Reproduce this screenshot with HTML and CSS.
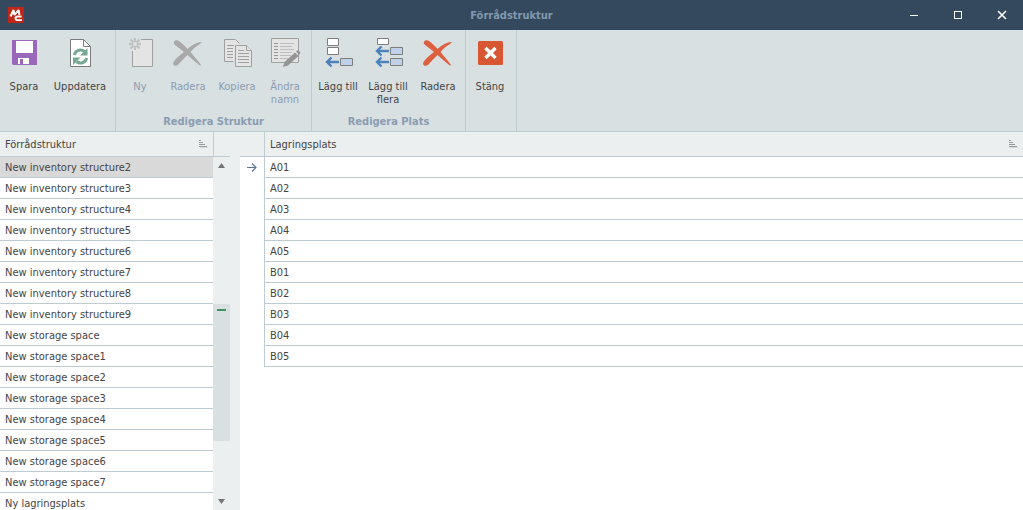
FILE: index.html
```html
<!DOCTYPE html>
<html lang="sv">
<head>
<meta charset="utf-8">
<title>Förrådstruktur</title>
<link rel="stylesheet" href="styles.css">
</head>
<body>
<svg class="defs" aria-hidden="true">
  <symbol id="cross" viewBox="0 0 32 32"><path d="M2 7C1 4 4 2 7 4C10 6 13 9 15.500 12C20 8 25 5 29.500 5C30.500 5.500 29 6 28 7C24 9 21 12 18.500 15C22 19 26 24 29 28C28.500 29 27 28 26 27C22 24 19 21 15.500 18C12 21 9 25 6 28C3 30 0 28 1.500 25C4 21 8 18 12 15C9 12 5 10 2 7Z"/></symbol>
  <symbol id="sort" viewBox="0 0 9 8"><path d="M0 .5h2M0 2.500h4M0 4.500h6M0 6.500h8" stroke="#9b9b9b" fill="none"/><path d="M1 7.500h8" stroke="#d5dada"/></symbol>
</svg>
<div class="window">
  <header class="titlebar">
    <svg class="logo" viewBox="0 0 16 16"><rect width="16" height="16" fill="#c02617"/><path d="M2.500 9.500L5.500 3L6.500 8L10.500 3L11.500 8" fill="none" stroke="#fff" stroke-width="2" stroke-linejoin="bevel"/><path d="M13.500 9.500H10Q7.500 9.500 7.500 11.300Q7.700 13.200 10 13.200H14" fill="none" stroke="#fff" stroke-width="1.800"/></svg>
    <h1 class="title">Förrådstruktur</h1>
    <div class="controls">
      <button class="control" aria-label="Minimera"><svg viewBox="0 0 10 10"><path d="M1 5.500h8" stroke="#fff"/></svg></button>
      <button class="control" aria-label="Maximera"><svg viewBox="0 0 10 10"><rect x="1.500" y="1.500" width="7" height="7" fill="none" stroke="#fff"/></svg></button>
      <button class="control" aria-label="Stäng fönster"><svg viewBox="0 0 10 10"><path d="M1 1l8 8M9 1L1 9" stroke="#fff" stroke-width="1.600"/></svg></button>
    </div>
  </header>

  <div class="ribbon">
    <section class="group file">
      <div class="tools">
        <button class="tool"><svg viewBox="0 0 32 32"><path d="M4 3h25v25H5l-1-1z" fill="#9b67bb"/><path d="M8 4h17v12H8zM10 21h11v6H10z" fill="#fff"/><path d="M12 22h3v5h-3z" fill="#9b67bb"/></svg>Spara</button>
        <button class="tool wide"><svg viewBox="0 0 32 32"><path d="M6.500 2.500h13l7 7v20h-20z" fill="#fff" stroke="#7b7b7b"/><path d="M19.500 2.500v7h7" fill="none" stroke="#7b7b7b"/><path d="M10.500 18a6 5.500 0 0 1 10-3.500M22.500 21a6 5.500 0 0 1-10 3.500" fill="none" stroke="#76a793" stroke-width="3"/><path d="M23.500 11v7.500H16zM9 28v-7.500h7.500z" fill="#76a793"/></svg>Uppdatera</button>
      </div>
    </section>
    <section class="group structure">
      <div class="tools">
        <button class="tool" disabled><svg viewBox="0 0 32 32"><path d="M16 3h12v8H16z" fill="#e4e4e4"/><path d="M8.500 14v15.500h20V11h-20z" fill="#e4e4e4"/><path d="M8.500 14v15.500h20v-27H17" fill="none" stroke="#a0a0a0"/><path d="M11 1v4M11 9v4M5 7h4M13 7h4M6.500 2.500l3 3M12.500 8.500l3 3M15.500 2.500l-3 3M9.500 8.500l-3 3" stroke="#bfc1c1" stroke-width="2"/></svg>Ny</button>
        <button class="tool" disabled><svg class="gray"><use href="#cross"/></svg>Radera</button>
        <button class="tool copy" disabled><svg viewBox="0 0 32 32"><g fill="#e4e4e4" stroke="#a0a0a0"><path d="M12.500 24.500h-9v-22h11l4 4"/><path d="M14.500 8.500h11l5 5v16h-16z"/><path d="M25.500 8.500v5h5M6 8.500h7M6 11.500h6M6 14.500h6M6 17.500h6M6 20.500h6M17 13.500h6M17 16.500h11M17 19.500h11M17 22.500h11M17 25.500h11"/></g></svg>Kopiera</button>
        <button class="tool rename" disabled><svg viewBox="0 0 32 32"><path d="M2.500 1.500h27v24h-27z" fill="#e4e4e4" stroke="#a0a0a0"/><path d="M5 6.500h4M5 9.500h4M5 12.500h4M5 15.500h4M5 18.500h4M5 21.500h4" stroke="#969696"/><path d="M11 6.500h14M11 9.500h12M11 12.500h14M11 15.500h12M11 18.500h11M11 21.500h8" stroke="#bdbdbd"/><path d="M14 30l1.500-5L26 15.500l3.500 3.500L19 28.500zM27 14.500l2-1.500 2.500 2.500-1.500 2.500z" fill="#949494"/></svg>Ändra<br>namn</button>
      </div>
      <h2 class="caption">Redigera Struktur</h2>
    </section>
    <section class="group place">
      <div class="tools">
        <button class="tool"><svg viewBox="0 0 32 32"><g stroke="#7d7d7d"><path d="M5.500 1.500h11v7h-11zM5.500 10.500h11v7h-11z" fill="#fff"/><path d="M18.500 21.500h12v7h-12z" fill="#bfd2ea"/></g><path d="M17 25H5M9.500 20.500L5 25l4.500 4.500" fill="none" stroke="#4b82bb" stroke-width="2.400"/></svg>Lägg till</button>
        <button class="tool"><svg viewBox="0 0 32 32"><g stroke="#7d7d7d"><path d="M5.500 1.500h11v6h-11z" fill="#fff"/><path d="M18.500 10.500h12v7h-12zM18.500 21.500h12v7h-12z" fill="#bfd2ea"/></g><path d="M17 14H5M9.500 9.500L5 14l4.500 4.500M17 25H5M9.500 20.500L5 25l4.500 4.500" fill="none" stroke="#4b82bb" stroke-width="2.400"/></svg>Lägg till<br>flera</button>
        <button class="tool"><svg class="red"><use href="#cross"/></svg>Radera</button>
      </div>
      <h2 class="caption">Redigera Plats</h2>
    </section>
    <section class="group close">
      <div class="tools">
        <button class="tool"><svg viewBox="0 0 32 32"><rect x="4" y="4" width="25" height="24" rx="1.500" fill="#d95632"/><path d="M11.500 11l10 10M21.500 11l-10 10" stroke="#fff" stroke-width="3.400"/></svg>Stäng</button>
      </div>
    </section>
  </div>

  <main class="panes">
    <div class="list">
      <table class="grid">
        <thead><tr><th><div class="head">Förrådstruktur<svg class="sort"><use href="#sort"/></svg></div></th></tr></thead>
        <tbody>
          <tr class="selected"><td>New inventory structure2</td></tr>
          <tr><td>New inventory structure3</td></tr>
          <tr><td>New inventory structure4</td></tr>
          <tr><td>New inventory structure5</td></tr>
          <tr><td>New inventory structure6</td></tr>
          <tr><td>New inventory structure7</td></tr>
          <tr><td>New inventory structure8</td></tr>
          <tr><td>New inventory structure9</td></tr>
          <tr><td>New storage space</td></tr>
          <tr><td>New storage space1</td></tr>
          <tr><td>New storage space2</td></tr>
          <tr><td>New storage space3</td></tr>
          <tr><td>New storage space4</td></tr>
          <tr><td>New storage space5</td></tr>
          <tr><td>New storage space6</td></tr>
          <tr><td>New storage space7</td></tr>
          <tr><td>Ny lagringsplats</td></tr>
        </tbody>
      </table>
    </div>
    <div class="scroll">
      <div class="corner"></div>
      <button class="step" aria-label="Rulla upp"><svg viewBox="0 0 7 5"><path d="M0 5L3.500 0L7 5z" fill="#747474"/></svg></button>
      <div class="track"><div class="thumb"><div class="mark"></div></div></div>
      <button class="step" aria-label="Rulla ned"><svg viewBox="0 0 7 5"><path d="M0 0h7L3.500 5z" fill="#747474"/></svg></button>
    </div>
    <div class="splitter"></div>
    <div class="detail">
      <table class="grid">
        <thead><tr><th class="marker"></th><th><div class="head">Lagringsplats<svg class="sort"><use href="#sort"/></svg></div></th></tr></thead>
        <tbody>
          <tr><td class="marker"><svg viewBox="0 0 10 9"><path d="M0 4.500h9M5 .5l4 4-4 4" fill="none" stroke="#5a7391" stroke-width="1.200"/></svg></td><td>A01</td></tr>
          <tr><td class="marker"></td><td>A02</td></tr>
          <tr><td class="marker"></td><td>A03</td></tr>
          <tr><td class="marker"></td><td>A04</td></tr>
          <tr><td class="marker"></td><td>A05</td></tr>
          <tr><td class="marker"></td><td>B01</td></tr>
          <tr><td class="marker"></td><td>B02</td></tr>
          <tr><td class="marker"></td><td>B03</td></tr>
          <tr><td class="marker"></td><td>B04</td></tr>
          <tr><td class="marker"></td><td>B05</td></tr>
        </tbody>
      </table>
    </div>
  </main>
</div>
</body>
</html>
```
FILE: styles.css
```css
* { box-sizing: border-box; }
body {
  margin: 0;
  font: 11px/13px "DejaVu Sans Condensed", "DejaVu Sans", sans-serif;
  font-stretch: condensed;
  color: #444;
  background: #fff;
}
button { border: 0; padding: 0; margin: 0; background: none; font: inherit; color: inherit; }
svg { display: block; }
.defs { display: none; }
.window { display: flex; flex-direction: column; height: 100vh; overflow: hidden; }

.titlebar {
  display: grid;
  grid-template-columns: 1fr auto 1fr;
  align-items: center;
  flex: none;
  height: 30px;
  background: #35495e;
}
.logo { width: 16px; height: 16px; margin-left: 8px; }
.title { margin: 0; font-size: 11px; font-weight: bold; color: #8099ae; }
.controls { display: flex; justify-content: flex-end; }
.control { display: grid; place-items: center; width: 44px; height: 30px; }
.control:last-child { width: 43px; }
.control svg { width: 10px; height: 10px; }

.ribbon {
  display: flex;
  flex: none;
  height: 102px;
  background: #d8e0e1;
  border-bottom: 1px solid #bdccd2;
}
.group {
  display: flex;
  flex-direction: column;
  justify-content: space-between;
  border-right: 1px solid #bdccd2;
}
.file { width: 116px; }
.structure { width: 196px; }
.place { width: 154px; }
.close { width: 51px; }
.tools { display: flex; align-items: flex-start; }
.tool { flex: none; width: 48px; padding-top: 7px; text-align: center; white-space: nowrap; }
.tool.wide { width: 64px; }
.tool.copy { width: 50px; }
.tool.rename { width: 46px; }
.place .tools { padding-left: 1px; }
.place .tool { width: 50px; }
.tool svg { width: 32px; height: 32px; margin: 0 auto 11px; }
.tool:disabled { color: #8b9cb3; }
.gray { fill: #a9a9a9; }
.red { fill: #dc6040; }
.caption { margin: 0; padding-bottom: 3px; font-size: 11px; font-weight: bold; text-align: center; color: #8b9cb3; }

.panes { display: flex; flex: 1; min-height: 0; }
.list { flex: none; width: 213px; overflow: hidden; }
.detail { flex: 1; min-width: 0; overflow: hidden; }
.grid { width: 100%; border-collapse: separate; border-spacing: 0; table-layout: fixed; }
.grid th {
  height: 25px;
  padding: 0 5px;
  font-weight: normal;
  text-align: left;
  background: #ebefef;
  border-bottom: 1px solid #bdccd2;
}
.head { display: flex; align-items: center; justify-content: space-between; }
.sort { width: 9px; height: 8px; }
.grid td { height: 21px; padding: 0 5px; border-bottom: 1px solid #bdccd2; }
.selected td { background: #d9d9d9; }
.grid .marker { width: 25px; padding: 0 7px; border-right: 1px solid #bdccd2; }
.grid td.marker { border-bottom: 0; }
.marker svg { width: 10px; height: 9px; }

.scroll { display: flex; flex-direction: column; flex: none; width: 17px; background: #ebefef; }
.corner { flex: none; height: 25px; border-left: 1px solid #bdccd2; border-bottom: 1px solid #bdccd2; }
.step { display: grid; place-items: center; flex: none; height: 17px; }
.step svg { width: 7px; height: 5px; }
.track { display: flex; flex-direction: column; flex: 1; padding-top: 130px; }
.thumb { height: 137px; padding-top: 5px; background: #d8e0e1; }
.mark { width: 9px; height: 2px; margin: 0 auto; background: #3f965c; }
.splitter { flex: none; width: 10px; background: #ebefef; }
```
